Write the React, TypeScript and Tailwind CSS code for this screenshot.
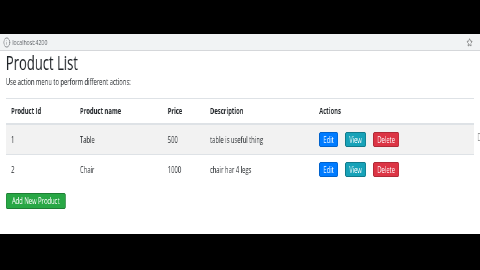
import { Info, Star } from "lucide-react";

interface IProduct {
  id: number;
  name: string;
  price: number;
  description: string;
}

const products: IProduct[] = [
  { id: 1, name: "Table", price: 500, description: "table is useful thing" },
  { id: 2, name: "Chair", price: 1000, description: "chair har 4 legs" },
];

const cols = "grid grid-cols-[106px_135px_65px_168px_246px] items-center";

export default function App() {
  return (
    <main
      className="w-[480px] h-[270px] overflow-hidden bg-black flex flex-col"
      style={{ fontFamily: '"Open Sans", "Noto Sans", sans-serif' }}
    >
      <div className="h-[34px] shrink-0 bg-black" />
      {/* screenshot is squeezed sideways, so the page is drawn wide and scaled down */}
      <div className="w-[738px] h-[200px] shrink-0 origin-top-left scale-x-[0.65] will-change-transform bg-white flex flex-col">
        <div className="h-[17px] bg-[#f1f3f4] border-b border-[#d5d7da] flex items-center px-[5px] gap-[3px] text-[#5f6368]">
          <Info size={11} strokeWidth={1.6} />
          <span className="text-[8px] leading-none">localhost:4200</span>
          <Star size={9} strokeWidth={1.8} className="ml-auto mr-[6px] text-[#444]" />
        </div>
        <div className="flex flex-col px-[9px] text-[#212529]">
          <h2 className="text-[20px] leading-[24px] font-medium">Product List</h2>
          <p className="text-[9px] leading-[12px] mt-[1px]">
            Use action menu to perform different actions:
          </p>
          <div className="relative mt-[10px] w-[720px] flex flex-col text-[9px]">
            <div className={`${cols} h-[27px] border-t border-b-2 border-[#dee2e6] font-bold`}>
              <span className="px-2">Product Id</span>
              <span className="px-2">Product name</span>
              <span className="px-2">Price</span>
              <span className="px-2">Description</span>
              <span className="px-2">Actions</span>
            </div>
            {products.map((item, idx) => (
              <div
                key={item.id}
                className={`${cols} ${
                  idx % 2 === 0 ? "bg-[#f2f2f2] h-[29px]" : "border-t border-[#dee2e6] h-[30px]"
                }`}
              >
                <span className="px-2">{item.id}</span>
                <span className="px-2">{item.name}</span>
                <span className="px-2">{item.price}</span>
                <span className="px-2">{item.description}</span>
                <div className="px-2 flex gap-[11px]">
                  <button className="w-[29px] h-[15px] flex items-center justify-center rounded-[2px] bg-[#007bff] border border-[#0062cc] text-white text-[9px]">
                    Edit
                  </button>
                  <button className="w-[32px] h-[15px] flex items-center justify-center rounded-[2px] bg-[#17a2b8] border border-[#117a8b] text-white text-[9px]">
                    View
                  </button>
                  <button className="w-[40px] h-[15px] flex items-center justify-center rounded-[2px] bg-[#dc3545] border border-[#b02a37] text-white text-[9px]">
                    Delete
                  </button>
                </div>
              </div>
            ))}
            <span className="absolute left-[725px] top-[32px] text-[10px] text-[#888]">D</span>
          </div>
          <button className="mt-[9px] w-[92px] h-[16px] flex items-center justify-center rounded-[2px] bg-[#28a745] border border-[#1e7e34] text-white text-[9px]">
            Add New Product
          </button>
        </div>
      </div>
      <div className="flex-1 bg-black" />
    </main>
  );
}
